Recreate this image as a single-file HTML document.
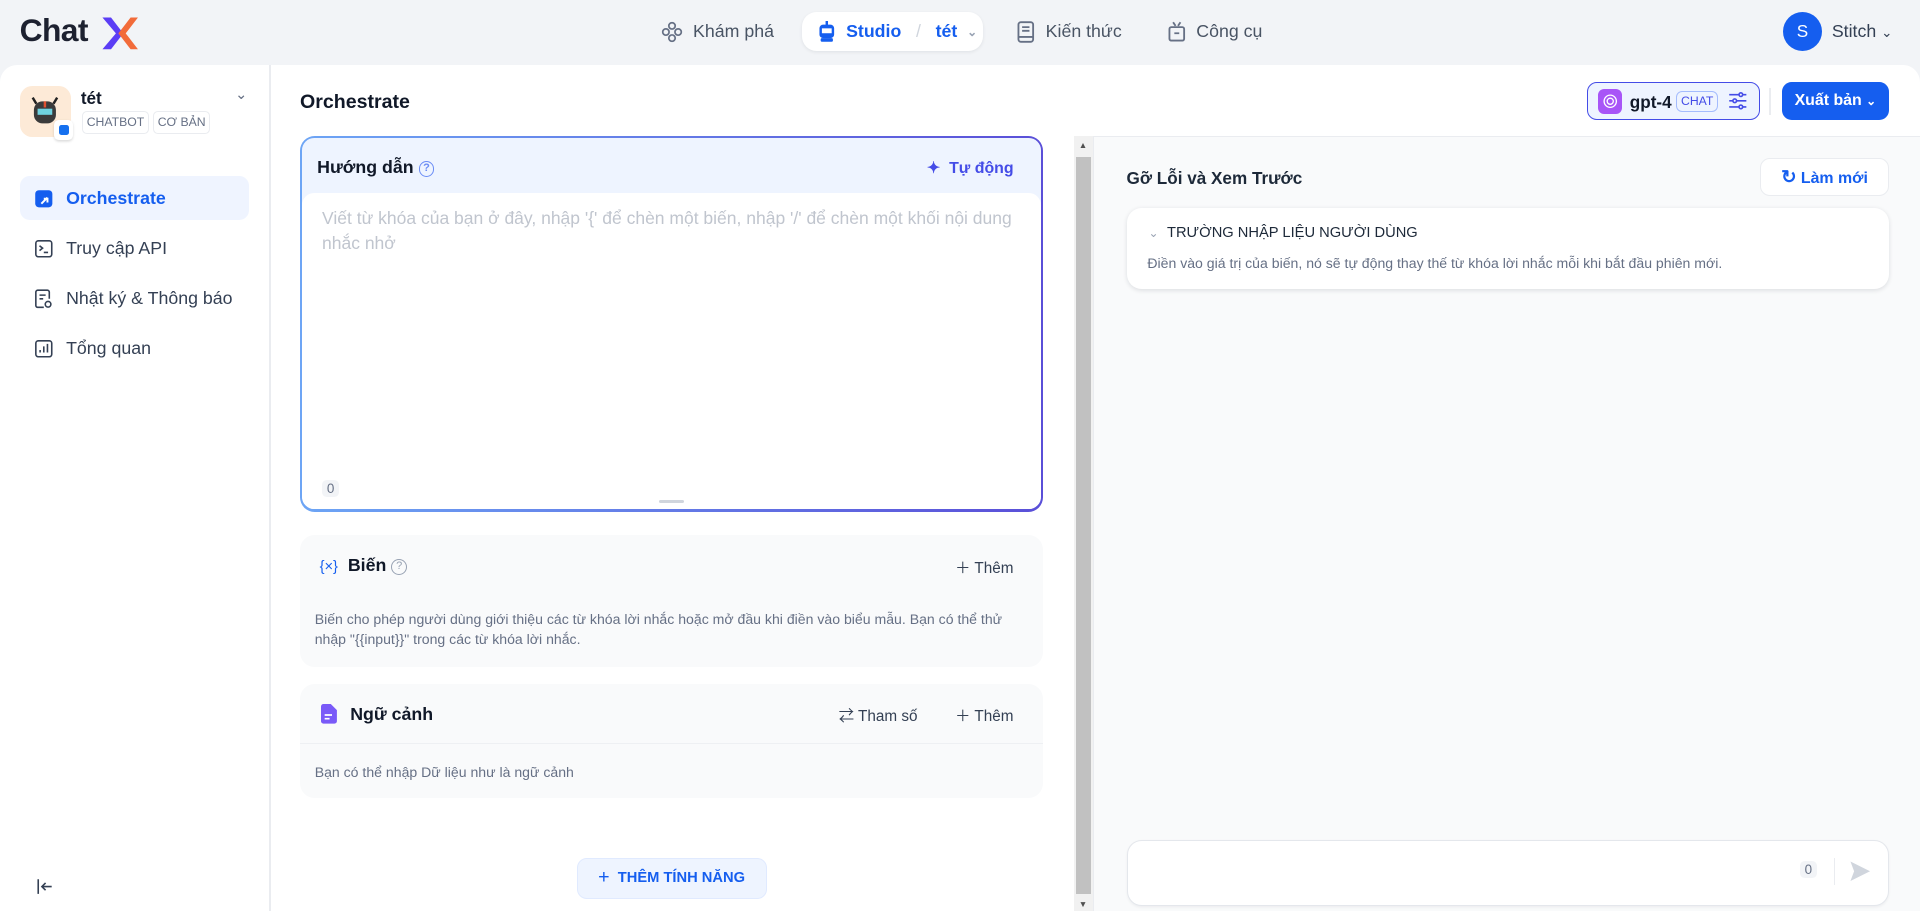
<!DOCTYPE html>
<html><head><meta charset="utf-8"><style>
*{box-sizing:border-box;margin:0;padding:0}
html,body{width:1920px;height:911px;overflow:hidden;background:#f2f4f7}
#r{zoom:1.22449;width:1568px;height:744px;position:relative;font-family:"Liberation Sans","Noto Sans CJK SC",sans-serif;color:#101828;background:#f2f4f7}
.a{position:absolute}
.nav{font-size:14.5px;color:#495464;display:flex;align-items:center;gap:8px;height:32px;top:10px}
.side{font-size:14.5px;color:#344054;display:flex;align-items:center;gap:10px;left:16px;width:187px;height:36px;padding-left:12px}
.card{background:#f9fafb;border-radius:12px;left:245px;width:607px}
.hd{font-size:14.5px;font-weight:600;color:#101828}
.gray{font-size:11.5px;color:#667085;line-height:17px}
.btn{font-size:12.5px;color:#344054;display:flex;align-items:center;gap:6px}
</style></head><body><div id="r">
<div class="a" style="left:16px;top:10px;font-size:26px;font-weight:700;color:#1d2130;letter-spacing:-0.5px">Chat</div>
<svg class="a" style="left:82px;top:12px" width="34" height="30" viewBox="0 0 34 30"><path d="M2 2 L13 15 L2 28 L9 28 L19 15 L9 2Z" fill="#5b3df5"/><path d="M31 2 L21 15 L31 28 L25 28 L15 15 L25 2Z" fill="#f26b3a"/></svg>
<div class="a nav" style="left:540px"><svg width="18" height="18" viewBox="0 0 18 18" fill="none" stroke="#667085" stroke-width="1.4"><circle cx="9" cy="4" r="2.6"/><circle cx="4" cy="9" r="2.6"/><circle cx="14" cy="9" r="2.6"/><circle cx="9" cy="14" r="2.6"/></svg>Khám phá</div>
<div class="a nav" style="left:655px;width:148px;background:#fff;border-radius:12px;padding-left:12px;box-shadow:0 1px 3px rgba(16,24,40,.08);color:#155eef;font-weight:600"><svg width="16" height="18" viewBox="0 0 16 18"><rect x="7" y="0" width="2" height="4" fill="#155eef"/><rect x="2" y="3" width="12" height="11" rx="3" fill="#155eef"/><rect x="4" y="6" width="8" height="4" fill="#fff"/><rect x="3" y="14" width="10" height="3" rx="1" fill="#155eef"/></svg>Studio <span style="color:#d0d5dd;font-weight:400;margin:0 4px">/</span> tét <span style="font-size:10px;color:#98a2b3">⌄</span></div>
<div class="a nav" style="left:830px"><svg width="16" height="18" viewBox="0 0 16 18" fill="none" stroke="#667085" stroke-width="1.5"><rect x="2" y="1" width="12" height="16" rx="2"/><path d="M5 5h6M5 8h6M2 13h12"/></svg>Kiến thức</div>
<div class="a nav" style="left:953px"><svg width="16" height="18" viewBox="0 0 16 18" fill="none" stroke="#667085" stroke-width="1.5"><rect x="2" y="5" width="12" height="11" rx="1.5"/><path d="M5 1l2 3M11 1l-2 3M6 10h4"/></svg>Công cụ</div>
<div class="a" style="left:1456px;top:10px;width:32px;height:32px;border-radius:50%;background:#155eef;color:#fff;font-size:14px;text-align:center;line-height:32px">S</div>
<div class="a" style="left:1496px;top:17px;font-size:14.5px;color:#344054">Stitch <span style="font-size:11px">⌄</span></div>
<div class="a" style="left:0;top:53px;width:1568px;height:691px;background:#fff;border-top-left-radius:14px;border-top-right-radius:14px"></div>
<div class="a" style="left:220px;top:53px;width:1px;height:691px;background:#eaecf0"></div>
<div class="a" style="left:16px;top:70px;width:42px;height:42px;border-radius:10px;background:#fdead7"></div>
<svg class="a" style="left:24px;top:77px" width="26" height="28" viewBox="0 0 26 28"><path d="M3 3 L6 8 M23 3 L20 8" stroke="#222" stroke-width="2"/><rect x="4" y="6" width="18" height="18" rx="7" fill="#3b3b3b"/><rect x="7" y="12" width="12" height="5" fill="#6fd3e0"/><rect x="12" y="6" width="2" height="5" fill="#e05030"/></svg>
<div class="a" style="left:44px;top:98px;width:16px;height:16px;border-radius:4px;background:#fff;box-shadow:0 1px 2px rgba(0,0,0,.15)"><div style="margin:4px;width:8px;height:8px;background:#1570ef;border-radius:2px"></div></div>
<div class="a" style="left:66px;top:72px;font-size:14px;font-weight:600">tét</div>
<div class="a" style="left:67px;top:91px;font-size:10px;color:#667085;border:1px solid #eaecf0;border-radius:4px;padding:2px 3px;line-height:13px">CHATBOT</div>
<div class="a" style="left:125px;top:91px;font-size:10px;color:#667085;border:1px solid #eaecf0;border-radius:4px;padding:2px 3px;line-height:13px">CƠ BẢN</div>
<div class="a" style="left:192px;top:70px;font-size:12px;color:#667085">⌄</div>
<div class="a side" style="top:144px;background:#eff4ff;border-radius:8px;color:#155eef;font-weight:600"><svg width="16" height="16" viewBox="0 0 16 16"><rect x="1" y="1" width="14" height="14" rx="3" fill="#155eef"/><path d="M6 12 L11 7 M8 8h3v3" stroke="#fff" stroke-width="1.6" fill="none"/></svg>Orchestrate</div>
<div class="a side" style="top:185px"><svg width="16" height="16" viewBox="0 0 16 16" fill="none" stroke="#344054" stroke-width="1.3"><rect x="1.5" y="1.5" width="13" height="13" rx="2"/><path d="M4.5 5.5l2.5 2-2.5 2M8 11h3.5"/></svg>Truy cập API</div>
<div class="a side" style="top:226px"><svg width="16" height="16" viewBox="0 0 16 16" fill="none" stroke="#344054" stroke-width="1.3"><path d="M8 15H3a1.5 1.5 0 0 1-1.5-1.5v-11A1.5 1.5 0 0 1 3 1h8a1.5 1.5 0 0 1 1.5 1.5V8"/><path d="M4.5 5h5M4.5 8h3"/><circle cx="11.5" cy="12.5" r="2.3"/></svg>Nhật ký &amp; Thông báo</div>
<div class="a side" style="top:267px"><svg width="16" height="16" viewBox="0 0 16 16" fill="none" stroke="#344054" stroke-width="1.3"><rect x="1.5" y="1.5" width="13" height="13" rx="2"/><path d="M5 11V9M8 11V6M11 11V4"/></svg>Tổng quan</div>
<svg class="a" style="left:30px;top:717px" width="14" height="14" viewBox="0 0 14 14" fill="none" stroke="#344054" stroke-width="1.3"><path d="M1 1v12M12 7H4M7 4L4 7l3 3"/></svg>
<div class="a" style="left:245px;top:74px;font-size:16px;font-weight:600">Orchestrate</div>
<div class="a" style="left:1296px;top:67px;width:141px;height:31px;border:1px solid #444ce7;border-radius:8px;background:#eef4ff"></div>
<div class="a" style="left:1305px;top:73px;width:20px;height:20px;border-radius:5px;background:#a855f7"><svg width="20" height="20" viewBox="0 0 20 20" fill="none" stroke="#fff" stroke-width="1.1"><circle cx="10" cy="10" r="5"/><circle cx="10" cy="10" r="2.5"/></svg></div>
<div class="a" style="left:1331px;top:75px;font-size:14px;font-weight:600;color:#101828">gpt-4</div>
<div class="a" style="left:1369px;top:74px;font-size:10px;color:#444ce7;border:1px solid #a4bcfd;border-radius:5px;padding:1px 3px;line-height:14px">CHAT</div>
<svg class="a" style="left:1411px;top:74px" width="16" height="16" viewBox="0 0 16 16" fill="none" stroke="#444ce7" stroke-width="1.3"><path d="M1 3h8M12 3h3M1 8h3M7 8h8M1 13h8M12 13h3"/><circle cx="10.5" cy="3" r="1.5"/><circle cx="5.5" cy="8" r="1.5"/><circle cx="10.5" cy="13" r="1.5"/></svg>
<div class="a" style="left:1445px;top:72px;width:1px;height:22px;background:#eaecf0"></div>
<div class="a" style="left:1455px;top:67px;width:88px;height:31px;border-radius:8px;background:#155eef;color:#fff;font-size:13px;font-weight:700;text-align:center;line-height:31px">Xuất bản <span style="font-size:10px">⌄</span></div>
<div class="a" style="left:245px;top:111px;width:607px;height:307px;border-radius:12px;background:linear-gradient(90deg,#6da5f5,#5a4fd8);padding:2px">
 <div style="width:100%;height:100%;border-radius:10px;background:#eef4ff;position:relative">
  <div class="a hd" style="left:12px;top:15px">Hướng dẫn <span style="display:inline-block;width:13px;height:13px;border:1.3px solid #6b8cf5;border-radius:50%;font-size:9px;color:#6b8cf5;text-align:center;line-height:11px;vertical-align:1px">?</span></div>
  <div class="a" style="left:510px;top:16px;font-size:13px;color:#444ce7;font-weight:600">✦ &nbsp;Tự động</div>
  <div class="a" style="left:0;top:45px;right:0;bottom:0;background:#fff;border-radius:10px">
   <div class="a" style="left:16px;top:10px;right:12px;font-size:14.3px;color:#c0c5ce;line-height:21px">Viết từ khóa của bạn ở đây, nhập '{' để chèn một biến, nhập '/' để chèn một khối nội dung nhắc nhở</div>
   <div class="a" style="left:16px;top:234px;font-size:11px;color:#667085;background:#f2f4f7;border-radius:4px;padding:1px 4px">0</div>
   <div class="a" style="left:291px;top:250px;width:21px;height:3px;border-radius:2px;background:#d0d5dd"></div>
  </div>
 </div>
</div>
<div class="a card" style="top:437px;height:108px">
 <div class="a hd" style="left:16px;top:16px"><span style="color:#155eef;font-size:12px;font-weight:400">{×}</span> &nbsp;Biến <span style="display:inline-block;width:13px;height:13px;border:1.2px solid #98a2b3;border-radius:50%;font-size:9px;color:#98a2b3;text-align:center;line-height:11px;vertical-align:1px;font-weight:400">?</span></div>
 <div class="a btn" style="left:535px;top:17px">＋ Thêm</div>
 <div class="a gray" style="left:12px;top:60px;width:585px">Biến cho phép người dùng giới thiệu các từ khóa lời nhắc hoặc mở đầu khi điền vào biểu mẫu. Bạn có thể thử nhập "{{input}}" trong các từ khóa lời nhắc.</div>
</div>
<div class="a card" style="top:559px;height:93px">
 <svg class="a" style="left:17px;top:16px" width="13" height="16" viewBox="0 0 13 16"><path d="M2 0h6l5 5v9a2 2 0 0 1-2 2H2a2 2 0 0 1-2-2V2a2 2 0 0 1 2-2z" fill="#7a5af8"/><path d="M3 9h6M3 12h4" stroke="#fff" stroke-width="1.4"/></svg>
 <div class="a hd" style="left:41px;top:16px">Ngữ cảnh</div>
 <div class="a btn" style="left:440px;top:16px">⇄ Tham số</div>
 <div class="a btn" style="left:535px;top:16px">＋ Thêm</div>
 <div class="a" style="left:0;right:0;top:48px;height:1px;background:#eef0f3"></div>
 <div class="a gray" style="left:12px;top:63px">Bạn có thể nhập Dữ liệu như là ngữ cảnh</div>
</div>
<div class="a" style="left:471px;top:701px;width:155px;height:33px;border-radius:8px;background:#eef4ff;border:1px solid #e0eaff;color:#155eef;font-size:12px;font-weight:600;text-align:center;line-height:31px"><span style="font-size:16px;font-weight:400;vertical-align:-1px">+</span> &nbsp;THÊM TÍNH NĂNG</div>
<div class="a" style="left:877px;top:111px;width:16px;height:633px;background:#f1f1f1"></div>
<div class="a" style="left:879px;top:128px;width:12px;height:602px;background:#c1c1c1"></div>
<div class="a" style="left:881px;top:114px;font-size:7px;color:#505050">▲</div>
<div class="a" style="left:881px;top:734px;font-size:7px;color:#505050">▼</div>
<div class="a" style="left:893px;top:111px;width:675px;height:633px;background:#f9fafb;border-top:1px solid #eaecf0;border-left:1px solid #eaecf0"></div>
<div class="a" style="left:920px;top:137px;font-size:14px;font-weight:600;color:#1d2939">Gỡ Lỗi và Xem Trước</div>
<div class="a" style="left:1437px;top:129px;width:106px;height:31px;border-radius:8px;background:#fff;border:1px solid #eaecf0;color:#155eef;font-size:13px;font-weight:600;text-align:center;line-height:29px"><span style="font-size:15px">↻</span> Làm mới</div>
<div class="a" style="left:920px;top:170px;width:623px;height:66px;border-radius:12px;background:#fff;box-shadow:0 1px 4px rgba(16,24,40,.12)">
 <div class="a" style="left:18px;top:14px;font-size:12px;color:#1d2939;font-weight:500"><span style="color:#98a2b3;font-size:10px">⌄</span> &nbsp;TRƯỜNG NHẬP LIỆU NGƯỜI DÙNG</div>
 <div class="a" style="left:17px;top:38px;font-size:11.5px;color:#667085">Điền vào giá trị của biến, nó sẽ tự động thay thế từ khóa lời nhắc mỗi khi bắt đầu phiên mới.</div>
</div>
<div class="a" style="left:920px;top:686px;width:623px;height:54px;border-radius:12px;background:#fff;border:1px solid #e4e7ec;box-shadow:0 1px 2px rgba(16,24,40,.05)">
 <div class="a" style="left:549px;top:16px;font-size:11px;color:#667085;background:#f2f4f7;border-radius:4px;padding:1px 4px">0</div>
 <div class="a" style="left:577px;top:14px;width:1px;height:22px;background:#eaecf0"></div>
 <svg class="a" style="left:588px;top:15px" width="20" height="20" viewBox="0 0 20 20"><path d="M2 2 L18 10 L2 18 L5 10Z" fill="#d0d5dd"/></svg>
</div>
</div></body></html>
